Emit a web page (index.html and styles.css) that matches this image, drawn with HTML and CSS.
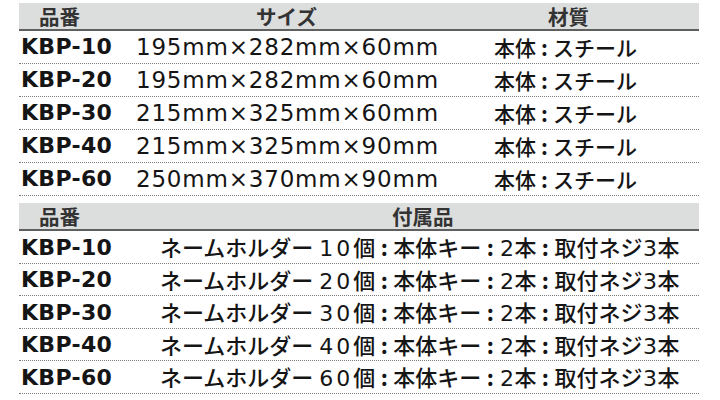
FILE: index.html
```html
<!DOCTYPE html>
<html lang="ja">
<head>
<meta charset="utf-8">
<link rel="stylesheet" href="styles.css">
</head>
<body>
<div class="page">
  <div class="spec spec-size">
    <div class="head">
      <div class="h h1">品番</div>
      <div class="h h2">サイズ</div>
      <div class="h h3">材質</div>
    </div>
    <div class="row"><div class="code">KBP-10</div><div class="dim">195mm×282mm×60mm</div><div class="jp">本体<span class="c">:</span>スチール</div></div>
    <div class="row"><div class="code">KBP-20</div><div class="dim">195mm×282mm×60mm</div><div class="jp">本体<span class="c">:</span>スチール</div></div>
    <div class="row"><div class="code">KBP-30</div><div class="dim">215mm×325mm×60mm</div><div class="jp">本体<span class="c">:</span>スチール</div></div>
    <div class="row"><div class="code">KBP-40</div><div class="dim">215mm×325mm×90mm</div><div class="jp">本体<span class="c">:</span>スチール</div></div>
    <div class="row"><div class="code">KBP-60</div><div class="dim">250mm×370mm×90mm</div><div class="jp">本体<span class="c">:</span>スチール</div></div>
  </div>
  <div class="spec spec-acc">
    <div class="head">
      <div class="h h1">品番</div>
      <div class="h h2">付属品</div>
    </div>
    <div class="row"><div class="code">KBP-10</div><div class="jp">ネームホルダー<span class="n n2">10</span>個<span class="c">:</span>本体キー<span class="c">:</span><span class="n n1">2</span>本<span class="c">:</span>取付ネジ<span class="n n1">3</span>本</div></div>
    <div class="row"><div class="code">KBP-20</div><div class="jp">ネームホルダー<span class="n n2">20</span>個<span class="c">:</span>本体キー<span class="c">:</span><span class="n n1">2</span>本<span class="c">:</span>取付ネジ<span class="n n1">3</span>本</div></div>
    <div class="row"><div class="code">KBP-30</div><div class="jp">ネームホルダー<span class="n n2">30</span>個<span class="c">:</span>本体キー<span class="c">:</span><span class="n n1">2</span>本<span class="c">:</span>取付ネジ<span class="n n1">3</span>本</div></div>
    <div class="row"><div class="code">KBP-40</div><div class="jp">ネームホルダー<span class="n n2">40</span>個<span class="c">:</span>本体キー<span class="c">:</span><span class="n n1">2</span>本<span class="c">:</span>取付ネジ<span class="n n1">3</span>本</div></div>
    <div class="row"><div class="code">KBP-60</div><div class="jp">ネームホルダー<span class="n n2">60</span>個<span class="c">:</span>本体キー<span class="c">:</span><span class="n n1">2</span>本<span class="c">:</span>取付ネジ<span class="n n1">3</span>本</div></div>
  </div>
</div>
</body>
</html>
```

FILE: styles.css
```css
html, body {
  margin: 0;
  padding: 0;
  background: #ffffff;
}

.page {
  width: 720px;
  height: 400px;
  padding: 3px 0 0 19px;
  box-sizing: border-box;
  font-family: "DejaVu Sans", "Noto Sans CJK JP", sans-serif;
  color: #151515;
  overflow: hidden;
}

.spec {
  width: 680px;
}

.spec-acc {
  margin-top: 7px;
}

.head {
  display: grid;
  height: 26px;
  background: #dcdddd;
  border-bottom: 2px solid #5f5f5f;
  align-items: center;
}

.h {
  font-family: "Noto Sans CJK JP", sans-serif;
  font-weight: 700;
  font-size: 20.5px;
  line-height: 26px;
  color: #333333;
}

.row {
  display: grid;
  align-items: center;
  border-bottom: 1px dotted #7a7a7a;
}

.spec-size .head,
.spec-size .row {
  grid-template-columns: 117px 358px 1fr;
}

.spec-size .row {
  height: 32px;
}

.spec-acc .head,
.spec-acc .row {
  grid-template-columns: 141px 1fr;
}

.spec-acc .row {
  height: 31.6px;
}

.spec-size .h1,
.spec-acc .h1 {
  padding-left: 20px;
}

.spec-size .h2 {
  padding-left: 120px;
}

.spec-size .h3 {
  padding-left: 54px;
}

.spec-acc .h2 {
  padding-left: 232px;
}

.code {
  font-family: "DejaVu Sans", sans-serif;
  font-weight: 700;
  font-size: 22px;
  line-height: 30px;
  padding-left: 2px;
  letter-spacing: 0.3px;
  white-space: nowrap;
}

.dim {
  font-family: "DejaVu Sans", sans-serif;
  font-size: 23px;
  line-height: 30px;
  letter-spacing: 0.8px;
  white-space: nowrap;
}

.jp {
  font-family: "Noto Sans CJK JP", sans-serif;
  font-weight: 500;
  font-size: 21px;
  line-height: 30px;
  white-space: nowrap;
}

.spec-acc .jp {
  font-size: 22px;
}

.c {
  display: inline-block;
  width: 17px;
  text-align: center;
  font-weight: 700;
}

.spec-acc .c {
  width: 18px;
}

.n {
  display: inline-block;
  font-family: "DejaVu Sans", sans-serif;
  font-weight: 400;
  font-size: 22px;
  text-align: center;
}

.n2 {
  padding-left: 6px;
  letter-spacing: 3px;
}

.n1 {
  width: 15px;
}
```
